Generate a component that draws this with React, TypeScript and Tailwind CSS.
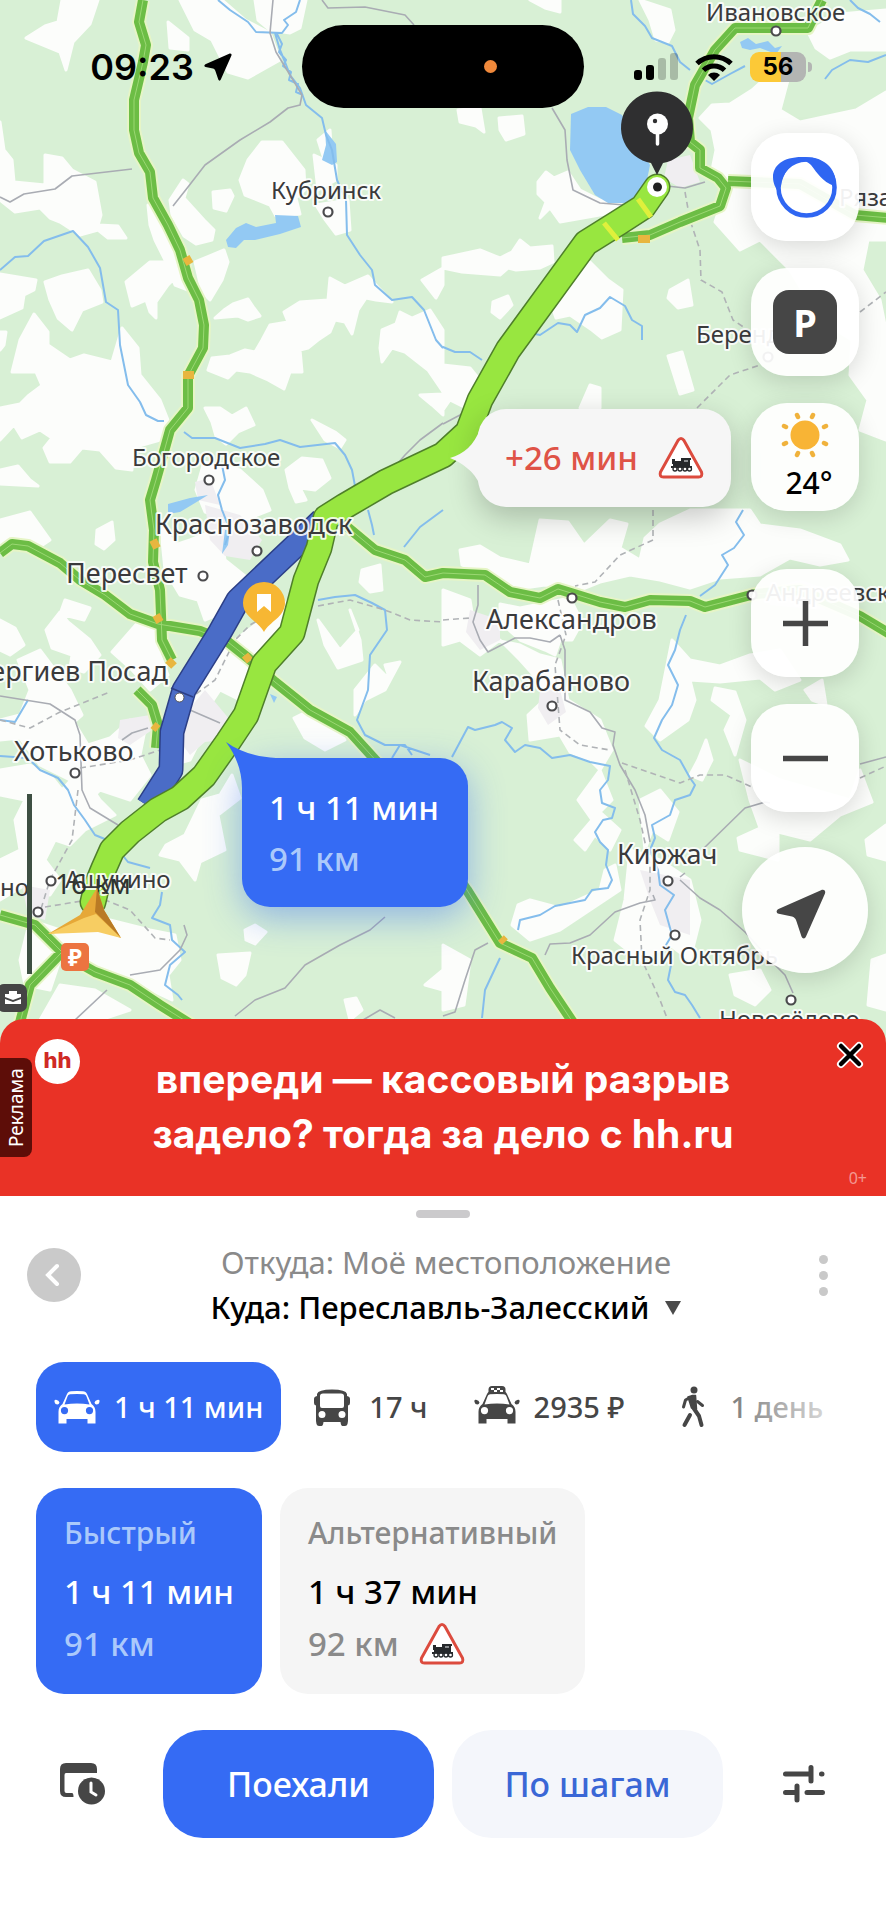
import type { ReactNode } from 'react'
import { clsx } from 'clsx'

const FIELDS = [
  'M62 0H98L90 24 73 42 66 70 60 52 26 38 45 26 58 22Z',
  'M168 22 188 38 188 50 170 48Z',
  'M180 0H222L245 20 270 33 280 60 248 78 228 72 212 40 195 30Z',
  'M255 0H306L300 28 290 33 270 30 258 20Z',
  'M0 122 4 150 12 160 14 182 45 185 45 155 62 158 72 170 95 182 101 215 98 225 118 226 126 238 108 238 98 230 80 235 60 222 50 218 40 208 15 212 0 200Z',
  'M0 274 36 280 34 290 24 295 22 308 0 318Z',
  'M45 282 62 276 88 270 100 290 102 302 82 310 72 330 58 318 50 300Z',
  'M126 282 150 262 172 262 178 275 168 285 156 302 156 318 150 312 146 300 132 306Z',
  'M262 142 282 142 304 170 305 190 296 198 300 214 276 216 270 205 245 195 240 180 248 160Z',
  'M213 192 230 190 233 196 226 211 214 208Z',
  'M170 200 183 180 188 184 184 198 204 220 214 230 212 240 196 244 184 236 172 215Z',
  'M148 205 158 215 170 245 190 265 188 290 175 285 165 260 155 240 150 225Z',
  'M195 262 224 250 228 262 222 280 210 300 202 292Z',
  'M318 140 330 130 332 160 326 165Z',
  'M314 155 336 165 336 180 318 190Z',
  'M316 205 348 200 350 230 336 234 324 218Z',
  'M330 278 345 286 368 276 375 284 392 302 376 300 366 298 358 310 352 334 345 322 335 320 330 332 318 340 308 348 300 350 302 372 290 372 284 389 268 380 250 372 236 370 228 378 208 370 212 358 230 356 245 350 255 352 262 340 270 325 288 322 284 312 300 302 328 300Z',
  'M233 304 248 299 254 308 260 316 248 320 238 316 215 318 224 310Z',
  'M382 330 396 324 400 312 412 318 430 310 443 330V392L428 370 405 352 392 348 382 362 380 348Z',
  'M422 280 443 268V285L436 298Z',
  'M0 332 6 332 4 345 0 350Z',
  'M20 340 34 314 48 332 48 345 70 360 84 355 112 362 122 328 138 348 140 375 160 400 168 420 160 440 132 448 132 470 116 468 100 450 82 448 70 462 50 462 44 448 52 438 40 430 22 438 14 425 0 440 0 408 20 404 28 396 44 384 58 406 50 408 46 395 36 372 12 372Z',
  'M0 470 18 466 30 480 38 486 0 484Z',
  'M205 408 220 408 232 416 246 408 254 425 238 432 226 444 216 436 212 422Z',
  'M286 470 302 458 322 460 330 478 315 490 300 488 306 500 296 502 290 488Z',
  'M312 420 335 432 345 440 340 448 325 440Z',
  'M204 462 240 470 262 490 270 510 240 522 205 512 196 490Z',
  'M420 395 443 394V415L432 405Z',
  'M458 110 480 108 484 132 476 126 460 122Z',
  'M499 118 522 116 524 134 506 140 500 130Z',
  'M640 0 670 10 674 30 668 42 656 40 650 20Z',
  'M530 0 560 0 560 12 545 8Z',
  'M700 118 712 105 730 104 752 90 770 74 788 80 780 110 800 122 856 110 886 92V240L868 240 862 270 880 300 886 330V440L860 430 868 400 850 375 852 340 820 320 790 270 760 240 740 250 715 222 722 200 720 180 712 170 716 150 712 130Z',
  'M538 182 546 172 554 178 568 172 580 190 600 200 620 204 628 210 560 222 550 208 540 218 546 202 538 194Z',
  'M808 32 840 14 886 10V50L850 50 830 58 816 48Z',
  'M443 258 480 250 500 258 512 252 520 240 530 248 552 246 553 262 540 268 516 270 508 268 500 275 462 272 443 268Z',
  'M493 302 508 296 512 305 500 318 492 312Z',
  'M562 275 590 262 608 280 622 290 620 330 602 338 592 330 570 315 556 318 550 300Z',
  'M670 290 688 280 692 305 678 308 668 298Z',
  'M668 356 682 352 693 390 680 394Z',
  'M590 385 600 388 600 408 580 408Z',
  'M443 365 470 368 488 390 470 410 450 400 443 410Z',
  'M535 455 545 475 530 482 525 470Z',
  'M540 520 568 522 584 545 610 520 627 524 620 548 640 560 645 538 660 524 690 510 750 510 760 525 800 530 840 545 848 560 820 565 790 558 760 575 720 578 690 588 660 580 630 575 600 582 580 590 545 585 510 590 462 565 460 550 480 546 500 558 530 565Z',
  'M520 608 570 598 582 622 572 640 560 640 555 655 545 650 520 640 500 622 500 604Z',
  'M443 590 470 600 474 625 495 640 520 645 540 655 560 660 568 700 600 720 612 750 600 770 590 760 570 752 560 735 530 740 528 715 544 700 538 680 520 660 500 640 480 655 460 640 443 645Z',
  'M672 640 690 660 720 666 750 655 780 650 800 680 775 690 760 678 720 682 690 680 695 700 688 720 660 740 646 726 660 700Z',
  'M715 688 735 692 745 720 735 755 725 730 732 715 712 700Z',
  'M805 690 822 680 826 705 812 700Z',
  'M698 760 706 740 712 760 702 780 690 775Z',
  'M740 760 780 780 850 800 860 770 872 802 840 815 810 840 778 832 778 860 740 850 738 838 760 828 750 800Z',
  'M578 800 600 770 612 800 600 812 620 830 610 850 595 835 585 850 575 840 592 820Z',
  'M640 800 660 790 678 812 668 840 652 830 645 850Z',
  'M630 850 660 860 690 880 700 920 690 960 670 945 640 960 615 940 625 900Z',
  'M518 905 530 900 560 908 600 890 605 870 615 865 620 890 590 910 560 930 530 940 512 925Z',
  'M443 945 470 960 464 1005 443 1010Z',
  'M730 975 760 970 770 990 755 1005 735 995Z',
  'M872 960 886 955V1010L868 1005Z',
  'M866 840 886 825V860L868 855Z',
  'M0 520 30 512 50 540 38 548 20 536 0 545Z',
  'M97 530 112 522 114 540 104 549 96 544Z',
  'M65 600 90 608 84 620 60 614Z',
  'M46 630 60 612 68 622 90 640 100 655 84 672 70 668 72 655 52 648Z',
  'M112 652 140 620 155 630 160 655 168 675 150 690 132 670Z',
  'M160 520 175 545 190 540 220 528 225 560 250 580 240 605 205 620 198 600 180 595 165 570Z',
  'M0 620 15 628 24 645 10 655 0 650Z',
  'M18 660 40 650 70 690 82 715 74 722 88 745 110 738 130 720 145 730 140 755 150 775 130 800 100 790 85 805 70 780 40 765 20 738 0 740 0 720 20 715 30 690Z',
  'M235 640 262 620 280 610 290 598 300 640 270 660 255 690 240 700 220 690 200 720 200 740 190 760 172 765 180 700 205 660Z',
  'M318 620 340 650 358 630 350 610 360 640 362 660 338 668 325 645Z',
  'M362 570 380 565 382 590 370 592 360 582Z',
  'M355 690 375 665 390 680 385 665 400 662 385 690 365 700 355 715Z',
  'M294 718 310 710 335 725 345 740 325 750 305 738Z',
  'M0 770 30 765 50 775 62 790 80 770 100 800 115 815 85 830 70 845 55 840 45 860 60 880 50 895 25 885 0 900 0 860 20 850 15 820 25 800 0 795Z',
  'M202 800 220 795 232 775 240 798 218 815 225 850 200 862 195 880 180 860 160 855 166 845 185 835Z',
  'M30 920 60 930 110 920 150 930 175 935 180 960 168 975 172 1000 140 985 100 975 60 960 50 990 25 985 20 960Z',
  'M218 955 250 953 245 975 236 985 222 978Z',
  'M245 930 255 925 266 932 255 944 246 940Z',
  'M60 985 95 990 130 1010 100 1020H40Z',
  'M345 1000 356 998 362 1010 350 1020Z',
  'M425 985 443 970V990Z',
]

const TOWNS = [
  'M205 505 240 515 262 540 250 560 225 556 210 540Z',
  'M195 482 210 478 220 505 198 500Z',
  'M172 730 205 690 230 720 222 740 205 742 190 755Z',
  'M120 720 150 715 152 730 130 745 118 738Z',
  'M22 885 50 890 45 920 28 915Z',
  'M470 610 500 620 500 640 480 650 466 632Z',
  'M668 160 690 155 700 182 680 188 664 178Z',
  'M540 690 560 690 566 712 548 725 538 708Z',
  'M640 870 690 880 690 935 660 925 650 900Z',
  'M765 590 800 580 830 590 825 610 770 605Z',
]

const RIVERS = [
  'M0 270 15 257 28 256 44 241 73 231 88 247 100 268 106 302 118 310 120 345 128 385 140 402 146 415 158 421 164 421',
  'M218 0 230 10 248 22 256 32 282 33 288 25 284 20 296 12 300 0',
  'M275 33 280 50 285 62 290 75 300 88 306 105 322 118 326 135 332 150 337 180 346 200 347 235 360 255 372 270 375 285 392 300 412 297 424 310 430 325 436 340 443 348',
  'M277 34 282 44 279 52 286 60 283 66 291 72 289 80 298 84 296 92 303 95',
  'M184 432 192 438 215 438 240 448 265 444 280 440 300 447 335 443 345 455 352 470 355 486',
  'M222 465 225 480 218 495 222 510 230 530 225 545',
  'M368 510 372 525 374 535M404 547 420 527 443 510',
  'M631 0 633 14 645 26 652 38 672 46 680 62 690 70',
  'M705 80 712 84 730 74 745 66M825 79 832 70 850 60 868 62 886 55',
  'M850 0 858 8 870 14 880 22',
  'M443 347 455 352 470 352 482 360M500 340 515 330 540 335 558 323 570 325 577 332 585 315 600 308 610 297 625 306 632 320 642 326 642 340',
  'M743 510 736 522 744 535 734 548 722 555 728 565 715 585 700 596M686 615 680 630 675 650 668 665 678 685 672 705 662 720 654 738 662 750 680 760 690 778 695 785 690 795 675 800 670 815 652 825 655 838 650 850 658 870 660 885 674 895 665 910 672 935 666 945 672 960 668 980 675 992 685 995 692 1005 700 1018',
  'M452 757 468 727 475 730 495 725 502 722 512 728 505 740 515 752 525 745 540 748 552 758 570 755 590 762 610 766 608 780 600 790 602 803 615 808 612 818 603 820 595 832 600 842 608 850 606 865 612 880 608 888 592 890 585 900 555 906 540 915 520 920 518 930',
  'M500 958 492 975 485 990 482 1018',
  'M318 600 335 597 355 595 372 603 385 610 387 630 370 655 368 690 357 720 365 735 385 745 405 745 412 755',
  'M0 756 28 758 40 770 58 778 68 790 74 805 85 820 95 835 112 842 128 862 150 868',
  'M162 892 160 905 152 918 170 925 172 940 185 952 170 965 165 985 178 995 182 1000',
  'M0 720 15 722 28 700M392 758 400 745 430 755',
]

const MINOR_ROADS = [
  'M0 197 10 202 24 194 55 189 72 176 132 169',
  'M273 0 270 33 276 52 290 75 302 95 300 105 288 108 270 122 240 140 205 165 188 187 173 206',
  'M322 0 328 8 365 7 405 15 414 25',
  'M443 423 420 440 405 455 392 470M443 424 460 415 468 408',
  'M552 108 565 130 567 160 573 190 600 203 625 205 640 195',
  'M658 185 685 188 705 182',
  'M0 696 50 704 75 720 80 735 82 790 90 808 118 825M122 740 132 733 148 728M190 710 220 723',
  'M75 1020 107 990M130 975 160 970 180 950 187 935 184 925',
  'M235 1016 255 1000 285 988 305 965 340 945 370 930 385 917M363 1020 380 1010 395 1018',
  'M478 585 478 605 473 622 480 640 488 652 515 638 530 638 550 642 560 635',
  'M560 635 565 650 565 700 590 712 602 728 615 732 613 745 620 765 635 790 645 815 650 842',
  'M702 850 745 808 765 802 770 803M680 877 685 873',
  'M680 880 700 898 720 910 745 932 770 960 785 975 793 993',
  'M653 895 655 900 640 903 615 912 590 935 570 943 550 944 545 955',
  'M488 943 475 950 465 980 455 1012 443 1016',
  'M860 764 886 757',
]

const DASHED_ROADS = [
  'M685 192 690 220 700 250 701 280 722 292 733 320 745 328M697 408 730 375 760 365M860 312 886 292',
  'M653 510 653 540 620 555 595 582 575 586',
  'M443 620 470 618M558 600 566 635 555 665 560 730 580 745 610 750M622 763 680 783 700 775 725 775 752 787M860 778 886 766',
  'M625 770 640 820 650 865 650 890 640 920 642 960 660 1000 667 1018',
  'M0 720 30 728 60 712 110 692M188 700 215 680 235 640 250 625 280 608',
  'M318 606 350 600 385 610 410 620 443 622',
  'M80 768 130 760 160 750M78 790 72 840 50 880 40 912M45 907 100 898 130 910 155 938 170 940',
]

const HIGHWAYS = [
  'M143 0 139 22 146 45 143 62 134 100 134 130 139 153 150 172 153 198 168 225 180 250 188 278 199 300 204 325 203 348 188 376 188 408 170 430 165 448 156 480 150 500 154 530 153 562 160 590 162 640 172 660',
  'M137 690 152 705 158 725 156 748',
  'M0 553 12 544 28 546 60 563 80 580 105 595 130 614 158 624 200 631 228 642 248 658 275 682 310 710 350 732 380 765 467 890 500 943 532 958 550 988 578 1030',
  'M345 525 375 550 405 560 425 577 443 573 485 575 510 592 540 598 558 589 600 602 625 607 650 600 690 601 705 607 755 594 800 590 860 616 890 634',
  'M0 915 35 925 65 955 95 972 130 985 160 1005 200 1030',
  'M62 952 30 985 18 1030',
  'M822 0 808 28 735 28 715 50 695 85 688 118 690 142 700 150 700 168 718 178 726 188 720 206 680 222 650 235 622 238',
  'M728 181 800 184 855 215 890 218',
]

const MAIN_ROUTE =
  'M93 902 97 885 104 868 112 850 130 832 158 810 180 798 204 776 228 742 246 715 264 664 292 633 306 580 319 548 326 518 345 506 386 482 443 455 468 432 480 400 508 350 586 243 618 223 643 207 657 187'
const ALT_ROUTE = 'M322 520 296 545 238 600 220 632 184 690 172 732 171 770 148 806'

interface Place {
  name: string
  x: number
  y: number
  dot?: [number, number]
  town?: boolean
}

const PLACES: Place[] = [
  { name: 'Ивановское', x: 706, y: 21, dot: [776, 31] },
  { name: 'Кубринск', x: 271, y: 199, dot: [328, 212] },
  { name: 'Рязанцево', x: 839, y: 206 },
  { name: 'Берендеево', x: 696, y: 343, dot: [768, 357] },
  { name: 'Богородское', x: 132, y: 466, dot: [209, 480] },
  { name: 'Краснозаводск', x: 155, y: 534, dot: [257, 551], town: true },
  { name: 'Пересвет', x: 66, y: 583, dot: [203, 576], town: true },
  { name: 'Сергиев Посад', x: -27, y: 681, town: true },
  { name: 'Хотьково', x: 14, y: 761, dot: [75, 773], town: true },
  { name: 'Ашукино', x: 65, y: 888, dot: [51, 881] },
  { name: 'Александров', x: 486, y: 629, dot: [572, 598], town: true },
  { name: 'Карабаново', x: 472, y: 691, dot: [552, 706], town: true },
  { name: 'Андреевское', x: 766, y: 601, dot: [752, 595] },
  { name: 'Киржач', x: 617, y: 864, dot: [668, 881], town: true },
  { name: 'Красный Октябрь', x: 571, y: 964, dot: [675, 935] },
  { name: 'Новосёлово', x: 719, y: 1028, dot: [791, 1000] },
]

function MapCanvas() {
  return (
    <svg
      className="absolute inset-0 h-full w-full"
      viewBox="0 0 886 1043"
      preserveAspectRatio="xMinYMin slice"
      fontFamily="'Noto Sans', sans-serif"
      aria-hidden="true"
    >
      <rect width="886" height="1043" fill="#d8f0d5" />
      <path d={FIELDS.join('')} fill="#fcfdfb" stroke="#fcfdfb" strokeWidth="3" strokeLinejoin="round" />
      <path d={TOWNS.join('')} fill="#f0eef1" />

      <g fill="#93c9f3">
        <path d="M571 114 588 107 606 107 622 115 650 165 645 190 632 203 608 203 595 195 580 170 570 150Z" />
        <path d="M226 240 236 228 246 223 256 227 276 223 275 215 298 216 301 227 280 234 255 240 244 240 236 248 228 247Z" />
        <path d="M325 130 336 144 337 162 332 165 322 160 326 145Z" />
        <path d="M740 42 748 38 756 44 768 41 775 48 782 46 776 54 760 48 750 50 742 48Z" />
        <path d="M168 504 190 498 208 495 195 503 180 512 168 514Z" />
        <path d="M225 530 230 530 228 545 222 554Z" />
        <path d="M270 694 277 697 274 703Z" />
      </g>
      <g fill="none" strokeLinejoin="round">
        <path d={RIVERS.join('')} stroke="#84bdec" strokeWidth="2" />
        <path d={MINOR_ROADS.join('')} stroke="#a9acb3" strokeWidth="1.6" />
        <path d={DASHED_ROADS.join('')} stroke="#b0b3b6" strokeWidth="1.6" strokeDasharray="6 4" />
        <path d={HIGHWAYS.join('')} stroke="#e6f5c6" strokeWidth="14" />
        <path d={HIGHWAYS.join('')} stroke="#6cbd45" strokeWidth="10" />
        <path d={HIGHWAYS.join('')} stroke="#9bd873" strokeWidth="1" />
      </g>
      <g stroke="#e8b63f" strokeWidth="8">
        <path d="M186 257 190 264M183 375H194M153 540 157 548M156 615 160 622M168 660 174 666M153 725 158 729M245 655 250 661M638 239 650 239M501 938 505 942" />
      </g>

      <g fill="none" strokeLinejoin="round">
        <path d={ALT_ROUTE} stroke="#2c3f86" strokeWidth="25" />
        <path d={ALT_ROUTE} stroke="#4a6cc7" strokeWidth="22" />
        <path d="M171 688 193 697" stroke="#2c3f86" strokeWidth="1.5" />
        <path d={MAIN_ROUTE} stroke="#4f7f2a" strokeWidth="27" strokeLinecap="round" />
        <path d={MAIN_ROUTE} stroke="#98e640" strokeWidth="24" strokeLinecap="round" />
        <path d="M604 223 618 240M638 199 651 217" stroke="#dff03c" strokeWidth="5" />
      </g>
      <circle cx="179.500" cy="697.500" r="4.500" fill="#fff" stroke="#555" />

      {PLACES.map((place) => (
        <g key={place.name}>
          <text
            x={place.x}
            y={place.y}
            fontSize={place.town ? 27 : 24}
            fill="#3a3a3c"
            stroke="#fff"
            strokeWidth="4"
            strokeOpacity="0.85"
            strokeLinejoin="round"
            paintOrder="stroke"
          >
            {place.name}
          </text>
          {place.dot && (
            <circle cx={place.dot[0]} cy={place.dot[1]} r="4.500" fill="#fff" stroke="#4b4b4d" strokeWidth="2.200" />
          )}
        </g>
      ))}
      <text x="0" y="896" fontSize="24" fill="#3a3a3c">
        но
      </text>
      <circle cx="38" cy="912" r="4.500" fill="#fff" stroke="#4b4b4d" strokeWidth="2.200" />

      {/* scale ruler */}
      <rect x="27" y="794" width="5" height="180" fill="#3d4f42" />
      <text x="55" y="894" fontSize="28" fill="#2f3531">
        16 км
      </text>

      {/* current position */}
      <path d="M97 888 80 915 48 934 96 928 121 938 104 910Z" fill="#e6a838" />
      <path d="M97 888 95 912 121 938 104 910Z" fill="#b97a25" />
      <path d="M48 934 84 918 96 914 121 938 98 932Z" fill="#f7cd62" />

      {/* bookmark */}
      <path d="M264 632C259 622 243 617 243 603A21 21 0 0 1 285 603C285 617 269 622 264 632Z" fill="#f7b733" />
      <path d="M257 594H271V612L264 606 257 612Z" fill="#fff" />

      {/* toll road */}
      <rect x="61" y="943" width="28" height="28" rx="5" fill="#ec7440" />
      <text x="75" y="966" fontSize="23" fontWeight="700" fill="#fff" textAnchor="middle">
        ₽
      </text>

      {/* work place */}
      <rect x="-3" y="984" width="30" height="28" rx="7" fill="#454545" />
      <path d="M5 994H9V991H17V994H21V997L13 1000 5 997ZM5 999 13 1002 21 999V1004H5Z" fill="#fff" />

      {/* destination */}
      <path d="M657 175 651 163A36 36 0 1 1 663 163Z" fill="#2f2f30" />
      <circle cx="657.500" cy="124" r="10.500" fill="#fff" />
      <path d="M657.500 130V144" stroke="#fff" strokeWidth="3.500" strokeLinecap="round" />
      <circle cx="655" cy="121" r="2.200" fill="#2f2f30" />
      <circle cx="657" cy="187" r="10" fill="#fff" />
      <circle cx="657.500" cy="187" r="4.500" fill="#222" />
    </svg>
  )
}

function NavArrow({ className }: { className?: string }) {
  return (
    <svg viewBox="0 0 50 50" className={className} fill="currentColor" aria-hidden="true">
      <path d="M45 1.200 2.500 20C0 21.300 0 24 2.800 24.800L16 27.500C18 28 19.500 29.500 20.200 31.500L25.500 47.500C26.500 50 29 50 30 47.500L49 4.500C50 2 48 0 45 1.200Z" />
    </svg>
  )
}

function StatusBar() {
  return (
    <header className="relative grid grid-cols-[1fr_282px_1fr] items-center pt-[25px]">
      <div className="flex items-center justify-center gap-2.5 pl-5 font-['Inter',sans-serif] text-black">
        <time className="text-4xl leading-none font-semibold">09:23</time>
        <NavArrow className="size-7" />
      </div>
      <div className="flex h-[83px] items-center justify-end rounded-full bg-black pr-[87px]">
        <span className="size-[13px] rounded-full bg-[#f0893b]" />
      </div>
      <div className="flex items-center justify-center gap-[17px] pr-6">
        <svg viewBox="0 0 44 28" className="h-7 w-11" aria-label="Сигнал сети">
          <rect x="0" y="17" width="8" height="10" rx="3" />
          <rect x="12" y="12" width="8" height="15" rx="3" />
          <rect x="24" y="5" width="8" height="22" rx="3" opacity=".22" />
          <rect x="36" y="0" width="8" height="27" rx="3" opacity=".22" />
        </svg>
        <svg viewBox="0 0 38 28" className="h-7 w-[38px]" fill="none" stroke="#000" strokeWidth="5" aria-label="Wi-Fi">
          <path d="M2 10.500A24.500 24.500 0 0 1 36 10.500M8.500 17.200A15 15 0 0 1 29.500 17.200" />
          <path d="M13 22A8.500 8.500 0 0 1 25 22L19 28Z" fill="#000" stroke="none" />
        </svg>
        <div className="flex items-center gap-0.5">
          <span className="flex h-[30px] w-14 items-center justify-center rounded-[9px] bg-linear-to-r from-[#fcc937] from-56% to-[#b3b5b3] to-56% font-['Inter',sans-serif] text-2xl font-bold text-black">
            56
          </span>
          <span className="h-2.5 w-1 rounded-r-full bg-[#b3b5b3]" />
        </div>
      </div>
    </header>
  )
}

function MapButton({ label, round, children }: { label: string; round?: boolean; children: ReactNode }) {
  return (
    <button
      type="button"
      aria-label={label}
      className={clsx(
        'flex flex-col items-center justify-center bg-white/93 text-[#464646] shadow-[0_6px_24px_rgba(0,0,0,0.14)]',
        round ? 'size-[126px] rounded-full' : 'size-[108px] rounded-[36px]'
      )}
    >
      {children}
    </button>
  )
}

function MapControls() {
  return (
    <nav className="relative mt-[25px] mr-[18px] ml-auto flex w-[126px] flex-col items-center gap-[27px]">
      <MapButton label="Алиса">
        <svg viewBox="0 0 66 62" className="h-[62px] w-[66px]" aria-hidden="true">
          <circle cx="34.500" cy="31.500" r="28" fill="none" stroke="#2f66f2" strokeWidth="4.500" />
          <path
            d="M33 1C12 0 1 9 1 21C1 28 4 32 6 36L9 30C11 17 18 9 25 7C30 4 34 4 39 9C46 18 50 25 62 30L64 34C66 14 54 1 33 1Z"
            fill="#2f66f2"
          />
        </svg>
      </MapButton>
      <MapButton label="Парковки">
        <span className="flex size-16 items-center justify-center rounded-2xl bg-[#464646] font-['Noto_Sans',sans-serif] text-[38px] font-bold text-white">
          P
        </span>
      </MapButton>
      <MapButton label="Погода">
        <svg viewBox="0 0 48 48" className="size-12" aria-hidden="true">
          <circle cx="24" cy="24" r="14.500" fill="#f8b435" />
          <g stroke="#f0b23c" strokeWidth="4.500" strokeLinecap="round">
            <path d="M16 4 17 6M32 4 31 6M3 15 5 16M45 15 43 16M3 33 5 32M45 33 43 32M16 44 17 42M32 44 31 42" />
          </g>
        </svg>
        <span className="pt-1 pl-2 font-['Noto_Sans',sans-serif] text-[30px] leading-10 font-medium text-black">24°</span>
      </MapButton>
      <div className="h-1" />
      <MapButton label="Приблизить">
        <svg viewBox="0 0 45 45" className="size-[45px]" stroke="currentColor" strokeWidth="5.500" aria-hidden="true">
          <path d="M0 22.500H45M22.500 0V45" />
        </svg>
      </MapButton>
      <MapButton label="Отдалить">
        <svg viewBox="0 0 45 45" className="size-[45px]" stroke="currentColor" strokeWidth="5.500" aria-hidden="true">
          <path d="M0 22.500H45" />
        </svg>
      </MapButton>
      <div className="mt-2">
        <MapButton label="Моё местоположение" round>
          <NavArrow className="mt-2 -ml-2 size-[50px]" />
        </MapButton>
      </div>
    </nav>
  )
}

function RailwaySign({ className }: { className?: string }) {
  return (
    <svg viewBox="0 0 46 42" className={className} aria-label="Железнодорожный переезд">
      <path
        d="M20 3.500Q23 -0.500 26 3.500L43.500 35Q45 40 40.500 40H5.500Q1 40 2.500 35Z"
        fill="#fff"
        stroke="#dc4b3e"
        strokeWidth="3"
      />
      <path d="M14 22H17V24H23V21H33V23H32V29H34V31H13V29H15V27H14Z" fill="#26292c" />
      <path d="M26 23H30V25H26Z" fill="#8a8d90" />
      <g fill="#fff" stroke="#26292c" strokeWidth="1.300">
        <circle cx="17" cy="32" r="2" />
        <circle cx="22" cy="32" r="2" />
        <circle cx="27" cy="32" r="2" />
        <circle cx="31.500" cy="32" r="2" />
      </g>
    </svg>
  )
}

function RouteCallouts() {
  return (
    <>
      <button
        type="button"
        className="absolute top-[409px] left-[478px] flex h-[98px] w-[253px] items-center justify-center gap-5 rounded-[28px] bg-[#f6f6f6] text-[33px] font-medium text-[#df5347] shadow-[0_10px_30px_rgba(0,0,0,0.22)]"
      >
        <svg viewBox="0 0 40 56" className="absolute top-5 -left-7 h-14 w-10" fill="#f6f6f6" aria-hidden="true">
          <path d="M0 29C14 25 24 16 30 0H40V56H30C24 42 12 34 0 29Z" />
        </svg>
        <span className="relative">+26 мин</span>
        <RailwaySign className="h-[42px] w-[46px]" />
      </button>
      <button
        type="button"
        className="absolute top-[758px] left-[242px] h-[149px] w-[226px] rounded-[28px] bg-[#356bf4] pl-[27px] text-left text-[33px] leading-[51px] font-medium text-white shadow-[0_10px_36px_rgba(53,107,244,0.45)]"
      >
        <svg viewBox="0 0 60 60" className="absolute -top-4 -left-4 size-[60px]" fill="#356bf4" aria-hidden="true">
          <path d="M0 0C14 10 30 15 50 16V60H16V46C16 28 9 12 0 0Z" />
        </svg>
        <span className="relative block">1 ч 11 мин</span>
        <span className="relative block text-[#abc9fb]">91 км</span>
      </button>
    </>
  )
}

function AdBanner() {
  return (
    <aside className="relative -mt-6 flex h-[177px] items-center justify-center rounded-t-3xl bg-[#e93226] pb-1 text-white">
      <p className="text-center font-['Inter',sans-serif] text-[39px] leading-[55px] font-bold">
        впереди — кассовый разрыв
        <br />
        задело? тогда за дело с hh.ru
      </p>
      <span className="absolute top-5 left-[35px] flex size-[45px] items-center justify-center rounded-full bg-white pb-0.5 font-['Inter',sans-serif] text-[22px] font-extrabold text-[#cf2a25]">
        hh
      </span>
      <span className="absolute top-[39px] left-0 flex h-[99px] w-8 rotate-180 items-center justify-center rounded-l-lg bg-[#5d0d08] text-[19px] [writing-mode:vertical-rl]">
        Реклама
      </span>
      <button type="button" aria-label="Закрыть" className="absolute top-[22px] right-[22px]">
        <svg viewBox="0 0 28 28" className="size-7" strokeLinecap="round" aria-hidden="true">
          <path d="M5 5 23 23M23 5 5 23" stroke="#fff" strokeWidth="8" />
          <path d="M5 5 23 23M23 5 5 23" stroke="#000" strokeWidth="4.500" />
        </svg>
      </button>
      <span className="absolute right-[19px] bottom-1.5 text-base text-white/50">0+</span>
    </aside>
  )
}

function CarIcon({ taxi }: { taxi?: boolean }) {
  return (
    <svg viewBox="0 0 46 38" className="h-[38px] w-[46px] overflow-visible" fill="currentColor" aria-hidden="true">
      <path
        fillRule="evenodd"
        d="M13 6C14 4 15 3.500 17 3.300Q23 2.600 29 3.300C31 3.500 32 4 33 6L37.500 16C40 18 41.500 20 41.500 24V35.500H33.500V31H12.500V35.500H4.500V24C4.500 20 6 18 8.500 16ZM13.500 8.500 10.500 16.500Q23 14.500 35.500 16.500L32.500 8.500Q32 6.500 30 6.300 23 5.600 16 6.300 14 6.500 13.500 8.500ZM10.500 19A3.600 3.600 0 1 0 10.500 26.200A3.600 3.600 0 1 0 10.500 19ZM35.500 19A3.600 3.600 0 1 0 35.500 26.200A3.600 3.600 0 1 0 35.500 19Z"
      />
      <path d="M0.500 14Q0 11.500 2 11.800 5 12.300 5.500 14.500 5 16.500 3.500 16.500 1 16.500 0.500 14ZM45.500 14Q46 11.500 44 11.800 41 12.300 40.500 14.500 41 16.500 42.500 16.500 45 16.500 45.500 14Z" />
      {taxi && (
        <>
          <path d="M14.500 5V1.500Q14.500 -2 18 -2H28Q31.500 -2 31.500 1.500V5Z" />
          <path d="M17 0H20V2H23V0H26V2H29V4H26V2H23V4H20V2H17Z" fill="#fff" />
        </>
      )}
    </svg>
  )
}

function BusIcon() {
  return (
    <svg viewBox="0 0 46 38" className="h-[38px] w-[46px]" fill="currentColor" aria-hidden="true">
      <path
        fillRule="evenodd"
        d="M8 6Q9 1.500 23 1.500T38 6V8Q41 8.500 41 11V15Q41 17 39 17.500V33L38.500 36Q38 38 36 38H33.500Q32 38 31.500 34H14.500Q14 38 12.500 38H10Q8 38 7.500 36L7 33V17.500Q5 17 5 15V11Q5 8.500 8 8ZM11 8V18Q11 20 13 20H33Q35 20 35 18V8Q35 5.500 32 5.500H14Q11 5.500 11 8ZM13 23A3.500 3.500 0 1 0 13 30A3.500 3.500 0 1 0 13 23ZM33 23A3.500 3.500 0 1 0 33 30A3.500 3.500 0 1 0 33 23Z"
      />
    </svg>
  )
}

function WalkIcon() {
  return (
    <svg viewBox="0 0 46 42" className="h-[42px] w-[46px]" fill="none" stroke="currentColor" aria-hidden="true">
      <circle cx="24" cy="4" r="3.500" fill="currentColor" stroke="none" />
      <path d="M18 11 22.500 9.500H25.500L26.500 23 21.500 22Z" fill="currentColor" strokeWidth="1.500" strokeLinejoin="round" />
      <g strokeLinecap="round" strokeLinejoin="round">
        <path d="M20 11.500 15.500 14 13.500 21M27.500 15.500 32.500 19.500" strokeWidth="3" />
        <path d="M23.500 22 29 30 31.500 39M20 29 14.500 39" strokeWidth="4" />
      </g>
    </svg>
  )
}

function BikeIcon() {
  return (
    <svg viewBox="0 0 46 38" className="h-[38px] w-[46px]" fill="none" stroke="currentColor" strokeWidth="3" aria-hidden="true">
      <circle cx="10" cy="26" r="8" />
      <circle cx="36" cy="26" r="8" />
      <path d="M10 26 17 13H31L24 26ZM15 7H20M28 7H33L36 26" />
    </svg>
  )
}

const MODES = [
  { id: 'car', label: '1 ч 11 мин', icon: <CarIcon /> },
  { id: 'bus', label: '17 ч', icon: <BusIcon /> },
  { id: 'taxi', label: '2935 ₽', icon: <CarIcon taxi /> },
  { id: 'walk', label: '1 день', icon: <WalkIcon /> },
  { id: 'bike', label: '5 ч', icon: <BikeIcon /> },
]

function ModeTabs() {
  return (
    <div className="relative mt-8">
      <div role="tablist" className="flex gap-2.5 overflow-hidden pl-9">
        {MODES.map((mode, i) => (
          <button
            key={mode.id}
            type="button"
            role="tab"
            aria-selected={i === 0}
            className={clsx(
              'flex h-[90px] shrink-0 items-center gap-3.5 rounded-[28px] px-[18px] text-[29px] font-medium',
              i === 0 ? 'bg-[#356bf4] text-white' : 'text-[#464646]'
            )}
          >
            {mode.icon}
            {mode.label}
          </button>
        ))}
      </div>
      <div className="pointer-events-none absolute inset-y-0 right-0 w-44 bg-linear-to-r from-white/20 to-white to-90%" />
    </div>
  )
}

function RouteHeader() {
  return (
    <div className="flex items-start justify-between pt-[22px] pr-[50px] pl-[27px]">
      <button
        type="button"
        aria-label="Назад"
        className="mt-2 flex size-[54px] items-center justify-center rounded-full bg-[#cacaca]"
      >
        <svg viewBox="0 0 24 24" className="size-6" fill="none" stroke="#fff" strokeWidth="4" strokeLinecap="round" aria-hidden="true">
          <path d="M15 3 6 12 15 21" />
        </svg>
      </button>
      <div className="flex flex-col items-center text-[31px] leading-[45px]">
        <button type="button" className="text-[#8a8a8a]">
          Откуда: Моё местоположение
        </button>
        <button type="button" className="flex items-center gap-4 font-medium text-black">
          Куда: Переславль-Залесский
          <svg viewBox="0 0 16 14" className="h-3.5 w-4" aria-hidden="true">
            <path d="M0 0H16L8 14Z" fill="#4a4a4a" />
          </svg>
        </button>
      </div>
      <button type="button" aria-label="Ещё" className="mt-2 flex h-[54px] flex-col items-center justify-center gap-[7px] px-2">
        <span className="size-[9px] rounded-full bg-[#c9c9c9]" />
        <span className="size-[9px] rounded-full bg-[#c9c9c9]" />
        <span className="size-[9px] rounded-full bg-[#c9c9c9]" />
      </button>
    </div>
  )
}

function RouteCard({
  title,
  time,
  distance,
  active,
  railway
}: {
  title: string
  time: string
  distance: string
  active?: boolean
  railway?: boolean
}) {
  return (
    <button
      type="button"
      className={clsx(
        'flex h-[206px] flex-col rounded-[28px] px-7 pt-5 text-left font-medium',
        active ? 'bg-[#356bf4] text-white' : 'bg-[#f5f5f5] text-black'
      )}
    >
      <span className={clsx('text-[30px] leading-[50px]', active ? 'text-[#abc9fb]' : 'text-[#8a8a8a]')}>{title}</span>
      <span className="mt-2 text-[33px] leading-[52px]">{time}</span>
      <span
        className={clsx(
          'flex items-center gap-5 text-[33px] leading-[52px]',
          active ? 'text-[#abc9fb]' : 'text-[#8a8a8a]'
        )}
      >
        {distance}
        {railway && <RailwaySign className="h-[42px] w-[46px]" />}
      </span>
    </button>
  )
}

function BottomActions() {
  return (
    <div className="mt-9 flex items-center justify-between gap-[18px] px-5">
      <button type="button" aria-label="Время отправления" className="flex flex-1 justify-center text-[#464646]">
        <svg viewBox="0 0 46 42" className="h-[42px] w-[46px]" aria-hidden="true">
          <path
            d="M6 0H31Q37 0 37 6V10H6Q4.500 10 4.500 12V28Q4.500 30 6.500 30H12Q13.500 30 13.500 34H6Q0 34 0 28V6Q0 0 6 0Z"
            fill="currentColor"
          />
          <circle cx="31.500" cy="28" r="15.500" fill="#fff" />
          <circle cx="31.500" cy="28" r="13.500" fill="currentColor" />
          <path d="M31 20V29L36 32" fill="none" stroke="#fff" strokeWidth="3" strokeLinecap="round" />
        </svg>
      </button>
      <button type="button" className="h-[108px] w-[271px] rounded-[40px] bg-[#356bf4] text-[34px] font-medium text-white">
        Поехали
      </button>
      <button type="button" className="h-[108px] w-[271px] rounded-[40px] bg-[#f4f6fb] text-[34px] font-medium text-[#3a67d6]">
        По шагам
      </button>
      <button type="button" aria-label="Параметры маршрута" className="flex flex-1 justify-center text-[#464646]">
        <svg viewBox="0 0 42 38" className="h-[38px] w-[42px]" stroke="currentColor" strokeWidth="5" strokeLinecap="round" aria-hidden="true">
          <path d="M2.500 9H28M28 2.500V16M38.500 9H39M2.500 27.500H14M14 21V35M24 27.500H39.500" />
        </svg>
      </button>
    </div>
  )
}

export default function App() {
  return (
    <div className="flex min-h-screen flex-col overflow-hidden bg-white font-['Noto_Sans',sans-serif]">
      <main className="relative flex-1 overflow-hidden pb-[69px]">
        <MapCanvas />
        <RouteCallouts />
        <StatusBar />
        <MapControls />
      </main>
      <AdBanner />
      <section className="bg-white pt-3.5 pb-[82px]">
        <div className="mx-auto h-2 w-[54px] rounded-full bg-[#cbcacc]" />
        <RouteHeader />
        <ModeTabs />
        <div className="mt-9 flex gap-[18px] pl-9">
          <RouteCard title="Быстрый" time="1 ч 11 мин" distance="91 км" active />
          <RouteCard title="Альтернативный" time="1 ч 37 мин" distance="92 км" railway />
        </div>
        <BottomActions />
      </section>
    </div>
  )
}
